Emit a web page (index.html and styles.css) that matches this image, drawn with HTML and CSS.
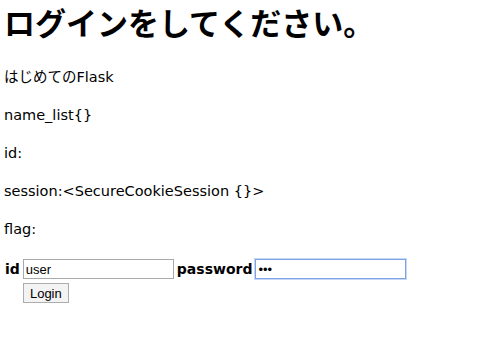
FILE: index.html
```html
<!DOCTYPE html>
<html>
<head>
  <meta charset="utf-8">
  <title>ログイン</title>
  <link rel="stylesheet" href="styles.css">
</head>
<body>
  <h1>ログインをしてください。</h1>
  <p>はじめてのFlask</p>
  <p>name_list{}</p>
  <p>id:</p>
  <p>session:&lt;SecureCookieSession {}&gt;</p>
  <p>flag:</p>
  <form class="login-form" action="#" method="post">
    <table class="login-table">
      <tr>
        <th>id</th>
        <td><input type="text" class="field" name="id" value="user"></td>
        <th>password</th>
        <td><input type="password" class="field field-focus" name="password" value="123"></td>
      </tr>
      <tr>
        <td></td>
        <td><button type="submit" class="login-button">Login</button></td>
      </tr>
    </table>
  </form>
</body>
</html>
```

FILE: styles.css
```css
body {
  margin: 4px;
  background: white;
  color: black;
  font-family: "DejaVu Sans", "Noto Sans CJK JP", sans-serif;
  font-size: 14.5px;
}
h1 {
  font-family: "Noto Sans CJK JP", sans-serif;
  font-size: 31px;
  line-height: 36px;
  margin: 0 0 26px 0;
}
p {
  line-height: 22px;
  margin: 16px 0;
}
.login-form {
  margin-top: 14px;
}
.login-table {
  border-spacing: 2px;
  line-height: 18px;
  margin-left: -1px;
}
.login-table th,
.login-table td {
  padding: 1px;
  text-align: left;
  vertical-align: middle;
}
.login-table th {
  padding: 1px 0;
  font-size: 14px;
  font-weight: bold;
}
.field {
  box-sizing: border-box;
  width: 151px;
  height: 20px;
  margin: 0;
  padding: 1px 2px;
  border: 1px solid #a9a9a9;
  font-family: "Liberation Sans", Arial, sans-serif;
  font-size: 13px;
  vertical-align: middle;
}
.field-focus {
  border-color: #7ea4e6;
  box-shadow: 0 0 0 1px #c5d7f5;
  outline: none;
}
.login-button {
  box-sizing: border-box;
  width: 46px;
  height: 20px;
  margin: 0;
  padding: 0;
  background: #f3f3f3;
  border: 1px solid #adadad;
  font-family: "Liberation Sans", Arial, sans-serif;
  font-size: 13px;
  vertical-align: middle;
}
```
